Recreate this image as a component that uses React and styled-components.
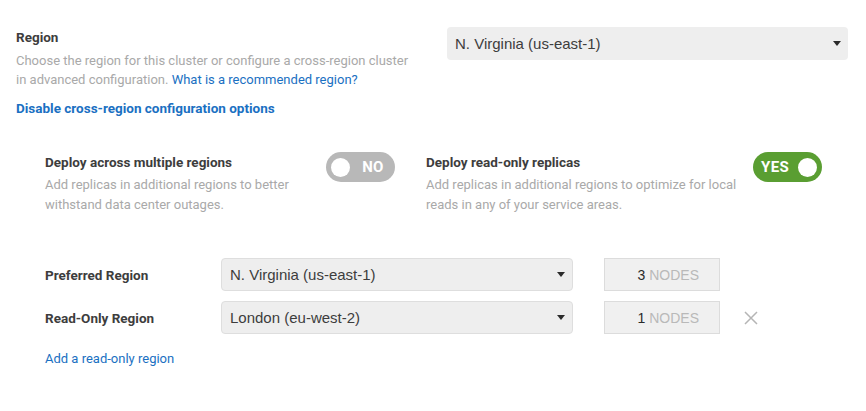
import React from 'react';
import styled, { createGlobalStyle } from 'styled-components';

const GlobalStyle = createGlobalStyle`
  body {
    margin: 0;
    background: #fff;
    font-family: Roboto, "Liberation Sans", Arial, sans-serif;
    color: #3d3d3d;
  }
`;

const Page = styled.div`
  width: 866px;
  padding: 27px 18px 0 16px;
  box-sizing: border-box;
`;

const TopRow = styled.div`
  display: flex;
  justify-content: space-between;
  align-items: flex-start;
`;

const Intro = styled.div`
  width: 400px;
`;

const Heading = styled.div`
  font-size: 13.5px;
  font-weight: bold;
  line-height: 20px;
  color: #3d3d3d;
`;

const Description = styled.p`
  margin: ${({ gap }) => gap || 4}px 0 0;
  font-size: 13px;
  line-height: ${({ lh }) => lh || 19}px;
  color: #a9a9a9;
`;

const Link = styled.a`
  color: #1a70c2;
  text-decoration: none;
  font-weight: ${({ bold }) => (bold ? 'bold' : 'normal')};
  cursor: pointer;
`;

const LinkLine = styled.div`
  margin-top: ${({ gap }) => gap}px;
  font-size: 13.5px;
  line-height: 20px;
`;

const SelectBox = styled.div`
  display: flex;
  align-items: center;
  justify-content: space-between;
  width: ${({ w }) => w}px;
  height: 33px;
  padding: 0 7px 0 8px;
  box-sizing: border-box;
  background: #eeeeee;
  border: ${({ bordered }) => (bordered ? '1px solid #dedede' : 'none')};
  border-radius: 4px;
  font-family: "Liberation Sans", Arial, sans-serif;
  font-size: 15px;
  color: #3d3d3d;
`;

const Caret = styled.span`
  width: 0;
  height: 0;
  border-left: 4px solid transparent;
  border-right: 4px solid transparent;
  border-top: 5px solid #2b2b2b;
`;

const Options = styled.div`
  display: flex;
  gap: 31px;
  margin-top: 34px;
  padding-left: 29px;
`;

const Option = styled.div`
  display: flex;
  justify-content: space-between;
  align-items: flex-start;
  width: ${({ w }) => w}px;
`;

const OptionText = styled.div`
  width: ${({ w }) => w}px;
`;

const Toggle = styled.div`
  display: flex;
  align-items: center;
  flex-direction: ${({ on }) => (on ? 'row-reverse' : 'row')};
  gap: 6px;
  width: 69px;
  height: 30px;
  padding: 0 5px;
  box-sizing: border-box;
  border-radius: 15px;
  background: ${({ on }) => (on ? '#5a9e32' : '#b8b8b8')};
  color: #fff;
  font-size: 15px;
  font-weight: bold;
  letter-spacing: 0.3px;
`;

const Knob = styled.span`
  width: 19px;
  height: 19px;
  border-radius: 50%;
  background: #fff;
  flex-shrink: 0;
`;

const ToggleText = styled.span`
  flex: 1;
  text-align: center;
`;

const Regions = styled.div`
  margin-top: 43px;
  padding-left: 29px;
  display: flex;
  flex-direction: column;
  gap: 10px;
`;

const RegionRow = styled.div`
  display: flex;
  align-items: center;
`;

const RowLabel = styled.div`
  width: 176px;
  font-size: 13.5px;
  font-weight: bold;
  color: #3d3d3d;
`;

const NodesBox = styled.div`
  display: flex;
  align-items: center;
  justify-content: flex-end;
  gap: 4px;
  margin-left: 31px;
  width: 116px;
  height: 33px;
  padding-right: 20px;
  box-sizing: border-box;
  background: #f0f0f0;
  border: 1px solid #dcdcdc;
  font-family: "Liberation Sans", Arial, sans-serif;
  font-size: 14px;
  color: #2b2b2b;
`;

const NodesUnit = styled.span`
  color: #b9b9b9;
`;

const Remove = styled.button`
  margin-left: 24px;
  padding: 0;
  border: none;
  background: none;
  display: flex;
  cursor: pointer;
`;

const AddLine = styled.div`
  margin-top: 5px;
  font-size: 13px;
  line-height: 20px;
`;

function Switch({ on }) {
  return (
    <Toggle on={on}>
      <Knob />
      <ToggleText>{on ? 'YES' : 'NO'}</ToggleText>
    </Toggle>
  );
}

const rows = [
  { label: 'Preferred Region', region: 'N. Virginia (us-east-1)', nodes: 3 },
  { label: 'Read-Only Region', region: 'London (eu-west-2)', nodes: 1, removable: true },
];

export default function App() {
  return (
    <>
      <GlobalStyle />
      <Page>
        <TopRow>
          <Intro>
            <Heading>Region</Heading>
            <Description>
              <span>
                Choose the region for this cluster or configure a cross-region cluster in advanced
                configuration.
              </span>{' '}
              <Link>What is a recommended region?</Link>
            </Description>
            <LinkLine gap={9}>
              <Link bold>Disable cross-region configuration options</Link>
            </LinkLine>
          </Intro>
          <SelectBox w={401}>
            <span>N. Virginia (us-east-1)</span>
            <Caret />
          </SelectBox>
        </TopRow>

        <Options>
          <Option w={350}>
            <OptionText w={260}>
              <Heading>Deploy across multiple regions</Heading>
              <Description gap={3} lh={20}>
                Add replicas in additional regions to better withstand data center outages.
              </Description>
            </OptionText>
            <Switch on={false} />
          </Option>
          <Option w={396}>
            <OptionText w={320}>
              <Heading>Deploy read-only replicas</Heading>
              <Description gap={3} lh={20}>
                Add replicas in additional regions to optimize for local reads in any of your
                service areas.
              </Description>
            </OptionText>
            <Switch on />
          </Option>
        </Options>

        <Regions>
          {rows.map((r) => (
            <RegionRow key={r.label}>
              <RowLabel>{r.label}</RowLabel>
              <SelectBox w={352} bordered>
                <span>{r.region}</span>
                <Caret />
              </SelectBox>
              <NodesBox>
                {r.nodes}
                <NodesUnit>NODES</NodesUnit>
              </NodesBox>
              {r.removable && (
                <Remove aria-label="Remove region">
                  <svg width="14" height="14" viewBox="0 0 14 14">
                    <path d="M1 1L13 13M13 1L1 13" stroke="#b5b5b5" strokeWidth="1.5" />
                  </svg>
                </Remove>
              )}
            </RegionRow>
          ))}
          <AddLine>
            <Link>Add a read-only region</Link>
          </AddLine>
        </Regions>
      </Page>
    </>
  );
}
